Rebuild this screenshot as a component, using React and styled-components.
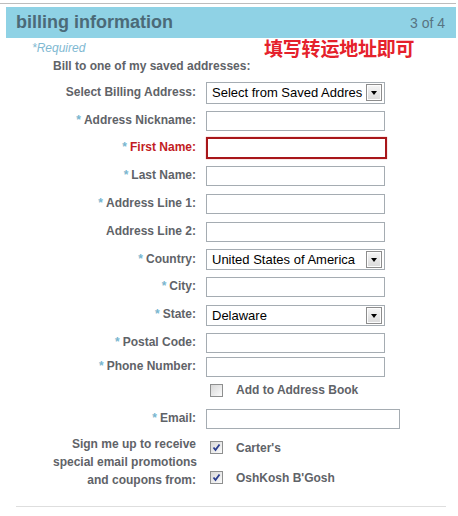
import React from 'react';
import styled, { createGlobalStyle } from 'styled-components';

const GlobalStyle = createGlobalStyle`
  body {
    margin: 0;
    background: #ffffff;
    font-family: 'Liberation Sans', Arial, sans-serif;
  }
`;

const Page = styled.div`
  width: 458px;
  padding-top: 3px;
`;

const TopRule = styled.div`
  width: 456px;
  height: 1px;
  background: #bdbdbd;
`;

const Header = styled.header`
  margin: 3px 2px 0 6px;
  height: 31px;
  background: #8fd2e5;
  display: flex;
  align-items: center;
  justify-content: space-between;
  padding: 0 11px 0 10px;
`;

const Title = styled.h1`
  margin: 0;
  font-size: 18px;
  font-weight: bold;
  color: #4b6a78;
`;

const Step = styled.span`
  font-size: 14px;
  color: #587482;
`;

const RequiredBar = styled.div`
  position: relative;
  margin-top: 1px;
  padding-left: 32px;
  height: 16px;
  line-height: 16px;
`;

const Required = styled.span`
  font-size: 12px;
  font-style: italic;
  color: #7fb9d2;
`;

const Note = styled.span`
  position: absolute;
  left: 264px;
  top: -1px;
  font-family: 'Noto Sans CJK SC', sans-serif;
  font-size: 19px;
  font-weight: bold;
  line-height: 19px;
  letter-spacing: -0.2px;
  color: #e5212b;
`;

const Intro = styled.p`
  margin: 3px 0 0 53px;
  font-size: 12px;
  font-weight: bold;
  line-height: 16px;
  color: #5f6368;
`;

const Form = styled.div`
  margin-top: 5px;
  padding-left: 53px;
`;

const Row = styled.div`
  display: grid;
  grid-template-columns: 143px auto;
  column-gap: 10px;
  align-items: ${(p) => (p.$top ? 'start' : 'center')};
  height: ${(p) => p.$h || 27.8}px;
`;

const Label = styled.label`
  text-align: right;
  white-space: nowrap;
  font-size: 12px;
  font-weight: bold;
  line-height: ${(p) => (p.$multi ? 18 : 14)}px;
  padding-bottom: ${(p) => (p.$multi ? 0 : 2)}px;
  color: ${(p) => (p.$error ? '#c21c24' : '#5f6368')};
`;

const Star = styled.span`
  color: #79b6cf;
  margin-right: 3px;
`;

const Input = styled.div`
  box-sizing: border-box;
  width: ${(p) => (p.$invalid ? 181 : p.$wide ? 194 : 179)}px;
  height: ${(p) => (p.$invalid ? 22 : 20)}px;
  border: ${(p) => (p.$invalid ? '2px solid #a8161a' : '1px solid #a5acb2')};
  box-shadow: ${(p) => (p.$invalid ? '0 0 1px #e07070' : 'none')};
  background: #fff;
`;

const Select = styled.div`
  box-sizing: border-box;
  width: 179px;
  height: ${(p) => p.$h || 21}px;
  border: 1px solid #a5acb2;
  display: flex;
  align-items: center;
  padding: 0 2px 0 5px;
  background: #fff;
`;

const SelectText = styled.span`
  flex: 1;
  min-width: 0;
  white-space: nowrap;
  font-size: 13px;
  color: #000;
`;

const ArrowButton = styled.span`
  box-sizing: border-box;
  flex: none;
  width: 16px;
  height: 17px;
  margin-left: 3px;
  border: 1px solid #8d8d8d;
  box-shadow: inset 0 0 0 1px #fdfdfd;
  background: linear-gradient(#f6f6f6, #dadada);
  display: flex;
  align-items: center;
  justify-content: center;

  &::after {
    content: '';
    border-left: 3.5px solid transparent;
    border-right: 3.5px solid transparent;
    border-top: 4px solid #000;
    margin-top: 1px;
  }
`;

const CheckList = styled.div`
  display: flex;
  flex-direction: column;
  gap: 4px;
`;

const CheckItem = styled.div`
  display: flex;
  align-items: center;
  gap: 13px;
  margin-left: 4px;
  height: 26px;
`;

const Box = styled.span`
  box-sizing: border-box;
  width: 13px;
  height: 13px;
  border: 1px solid #8e8f8f;
  background: linear-gradient(135deg, #d8d8d8, #fbfbfb);
  display: flex;
  align-items: center;
  justify-content: center;
`;

const CheckText = styled.span`
  font-size: 12px;
  font-weight: bold;
  color: #5f6368;
`;

const BottomRule = styled.div`
  margin: 17px 0 0 16px;
  width: 430px;
  height: 1px;
  background: #dedede;
`;

const Checkbox = ({ checked }) => (
  <Box>
    {checked && (
      <svg width="9" height="9" viewBox="0 0 9 9">
        <path d="M1.5 4.5 L3.5 7 L7.5 1.5" fill="none" stroke="#2b3d8f" strokeWidth="1.8" />
      </svg>
    )}
  </Box>
);

const Field = ({ label, req, error, children, h }) => (
  <Row $h={h}>
    <Label $error={error}>
      {req && <Star>*</Star>}
      {label}
    </Label>
    {children}
  </Row>
);

const App = () => (
  <Page>
    <GlobalStyle />
    <TopRule />
    <Header>
      <Title>billing information</Title>
      <Step>3 of 4</Step>
    </Header>
    <RequiredBar>
      <Required>*Required</Required>
      <Note>填写转运地址即可</Note>
    </RequiredBar>
    <Intro>Bill to one of my saved addresses:</Intro>
    <Form>
      <Field label="Select Billing Address:">
        <Select $h={22}>
          <SelectText>Select from Saved Addres</SelectText>
          <ArrowButton />
        </Select>
      </Field>
      <Field label="Address Nickname:" req>
        <Input />
      </Field>
      <Field label="First Name:" req error>
        <Input $invalid />
      </Field>
      <Field label="Last Name:" req>
        <Input />
      </Field>
      <Field label="Address Line 1:" req>
        <Input />
      </Field>
      <Field label="Address Line 2:">
        <Input />
      </Field>
      <Field label="Country:" req>
        <Select>
          <SelectText>United States of America</SelectText>
          <ArrowButton />
        </Select>
      </Field>
      <Field label="City:" req>
        <Input />
      </Field>
      <Field label="State:" req>
        <Select>
          <SelectText>Delaware</SelectText>
          <ArrowButton />
        </Select>
      </Field>
      <Field label="Postal Code:" req>
        <Input />
      </Field>
      <Field label="Phone Number:" req h={20}>
        <Input />
      </Field>
      <Row $h={27}>
        <span />
        <CheckItem>
          <Checkbox />
          <CheckText>Add to Address Book</CheckText>
        </CheckItem>
      </Row>
      <Field label="Email:" req h={31}>
        <Input $wide />
      </Field>
      <Row $top $h={54}>
        <Label $multi>
          Sign me up to receive
          <br />
          special email promotions
          <br />
          and coupons from:
        </Label>
        <CheckList>
          <CheckItem>
            <Checkbox checked />
            <CheckText>Carter's</CheckText>
          </CheckItem>
          <CheckItem>
            <Checkbox checked />
            <CheckText>OshKosh B'Gosh</CheckText>
          </CheckItem>
        </CheckList>
      </Row>
    </Form>
    <BottomRule />
  </Page>
);

export default App;
